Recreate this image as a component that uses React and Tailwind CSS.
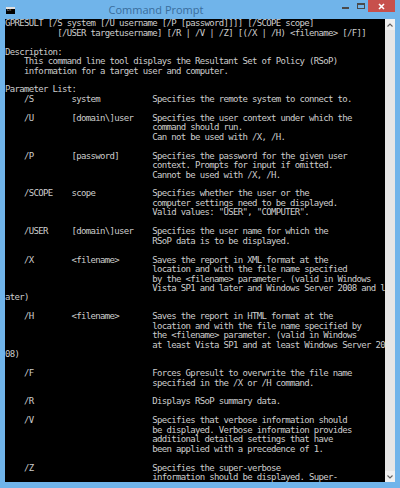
import React from "react";

const pad = (s, n) => s + " ".repeat(Math.max(0, n - s.length));
const row = (flag, arg, desc) => pad(pad("    " + flag, 14) + arg, 31) + desc;
const cont = (desc) => " ".repeat(31) + desc;

const lines = [
  "GPRESULT [/S system [/U username [/P [password]]]] [/SCOPE scope]",
  "           [/USER targetusername] [/R | /V | /Z] [(/X | /H) <filename> [/F]]",
  "",
  "Description:",
  "    This command line tool displays the Resultant Set of Policy (RSoP)",
  "    information for a target user and computer.",
  "",
  "Parameter List:",
  row("/S", "system", "Specifies the remote system to connect to."),
  "",
  row("/U", "[domain\\]user", "Specifies the user context under which the"),
  cont("command should run."),
  cont("Can not be used with /X, /H."),
  "",
  row("/P", "[password]", "Specifies the password for the given user"),
  cont("context. Prompts for input if omitted."),
  cont("Cannot be used with /X, /H."),
  "",
  row("/SCOPE", "scope", "Specifies whether the user or the"),
  cont("computer settings need to be displayed."),
  cont('Valid values: "USER", "COMPUTER".'),
  "",
  row("/USER", "[domain\\]user", "Specifies the user name for which the"),
  cont("RSoP data is to be displayed."),
  "",
  row("/X", "<filename>", "Saves the report in XML format at the"),
  cont("location and with the file name specified"),
  cont("by the <filename> parameter. (valid in Windows"),
  cont("Vista SP1 and later and Windows Server 2008 and l"),
  "ater)",
  "",
  row("/H", "<filename>", "Saves the report in HTML format at the"),
  cont("location and with the file name specified by"),
  cont("the <filename> parameter. (valid in Windows"),
  cont("at least Vista SP1 and at least Windows Server 20"),
  "08)",
  "",
  row("/F", "", "Forces Gpresult to overwrite the file name"),
  cont("specified in the /X or /H command."),
  "",
  row("/R", "", "Displays RSoP summary data."),
  "",
  row("/V", "", "Specifies that verbose information should"),
  cont("be displayed. Verbose information provides"),
  cont("additional detailed settings that have"),
  cont("been applied with a precedence of 1."),
  "",
  row("/Z", "", "Specifies the super-verbose"),
  cont("information should be displayed. Super-"),
];

export default function App() {
  return (
    <div className="w-[400px] h-[488px] bg-[#70b4ea] flex flex-col overflow-hidden">
      {/* Title bar */}
      <div className="h-[19px] flex items-start shrink-0">
        <div className="w-[5px]" />
        <div className="mt-[7px] ml-[1px] w-[9px] h-[7px] bg-black border-t-[2px] border-[#e0e0e0] flex items-start">
          <span className="text-[3px] leading-[3px] text-white ml-[1px]">C:\</span>
        </div>
        <div
          className="flex-1 text-center text-[11px] leading-[19px] text-[#3a6d9c] pr-[40px]"
          style={{ fontFamily: '"Open Sans", "Noto Sans", sans-serif' }}
        >
          Command Prompt
        </div>
        <div className="flex items-start">
          <div className="w-[17px] h-[12px] flex items-center justify-center">
            <div className="w-[7px] h-[2px] bg-[#4a4a4a] mt-[3px]" />
          </div>
          <div className="w-[14px] h-[12px] flex items-center justify-center">
            <div className="w-[8px] h-[6px] border border-[#4a4a4a] border-t-2" />
          </div>
          <div className="w-[27px] h-[12px] bg-[#c7504c] flex items-center justify-center">
            <svg width="7" height="7" viewBox="0 0 7 7">
              <path d="M1 1 L6 6 M6 1 L1 6" stroke="white" strokeWidth="1.6" />
            </svg>
          </div>
          <div className="w-[5px]" />
        </div>
      </div>
      {/* Client area */}
      <div className="flex-1 flex mx-[5px] mb-[6px] min-h-0">
        <div className="flex-1 bg-black overflow-hidden">
          <pre
            className="m-0 pt-[0.3px] text-[9px] leading-[9.46px] tracking-[-0.668px] text-[#cdcdcd] whitespace-pre"
            style={{ fontFamily: '"DejaVu Sans Mono", "Liberation Mono", monospace' }}
          >
            {lines.join("\n")}
          </pre>
        </div>
        <div className="w-[10px] bg-[#e6e6e6] flex flex-col justify-between">
          <div className="h-[11px] bg-[#f0f0f0] flex items-center justify-center">
            <svg width="6" height="4" viewBox="0 0 6 4">
              <path d="M0.5 3.5 L3 1 L5.5 3.5" stroke="#606060" strokeWidth="1.1" fill="none" />
            </svg>
          </div>
          <div className="h-[11px] bg-[#f0f0f0] flex items-center justify-center">
            <svg width="6" height="4" viewBox="0 0 6 4">
              <path d="M0.5 0.5 L3 3 L5.5 0.5" stroke="#606060" strokeWidth="1.1" fill="none" />
            </svg>
          </div>
        </div>
      </div>
    </div>
  );
}
